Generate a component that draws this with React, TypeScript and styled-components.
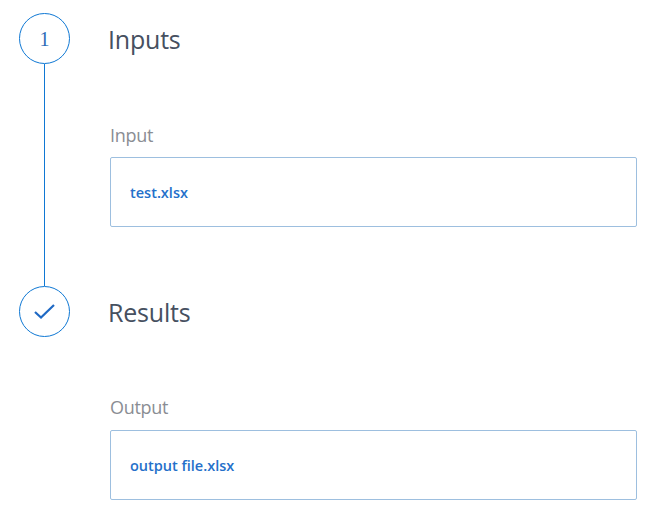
import { createGlobalStyle, styled } from 'styled-components';

const GlobalStyle = createGlobalStyle`
  html, body {
    margin: 0;
    padding: 0;
    background: #fff;
    font-family: "Open Sans", "Noto Sans", sans-serif;
  }
`;

const Page = styled.div`
  width: 651px;
  height: 531px;
  padding: 13px 14px 0 19px;
  box-sizing: border-box;
  overflow: hidden;
`;

const Step = styled.section`
  display: flex;
`;

const Rail = styled.div`
  width: 51px;
  display: flex;
  flex-direction: column;
  align-items: center;
  flex: none;
`;

const Circle = styled.div`
  width: 51px;
  height: 51px;
  box-sizing: border-box;
  border: 1px solid #0f78d4;
  border-radius: 50%;
  display: flex;
  align-items: center;
  justify-content: center;
  flex: none;
`;

const Digit = styled.span`
  margin-top: 2px;
  color: #2b6cb8;
  font-family: "Liberation Serif", serif;
  font-size: 20px;
`;

const Line = styled.div`
  width: 1px;
  flex: 1;
  background: #0f78d4;
`;

const Content = styled.div`
  flex: 1;
  margin-left: 38px;
`;

const Heading = styled.h2`
  margin: 0;
  height: 51px;
  display: flex;
  align-items: center;
  font-size: 25px;
  font-weight: 400;
  letter-spacing: -0.2px;
  color: #46505f;
`;

const Field = styled.div<{ $bottom: number; $top: number }>`
  margin: 0 0 ${(p) => p.$bottom}px 2px;
  padding-top: ${(p) => p.$top}px;
`;

const Label = styled.div<{ $gap: number }>`
  font-size: 18px;
  line-height: 24px;
  letter-spacing: -0.3px;
  color: #8a8d93;
  margin-bottom: ${(p) => p.$gap}px;
`;

const FileBox = styled.div`
  height: 70px;
  box-sizing: border-box;
  border: 1px solid #9dbfdf;
  border-radius: 2px;
  padding-left: 19px;
  display: flex;
  align-items: center;
  font-size: 14.5px;
  font-weight: 600;
  color: #2470ca;
`;

const steps = [
  { title: 'Inputs', label: 'Input', file: 'test.xlsx', done: false, top: 59, gap: 10, bottom: 59 },
  { title: 'Results', label: 'Output', file: 'output file.xlsx', done: true, top: 58, gap: 11, bottom: 0 },
];

const App = () => {
  return (
    <>
      <GlobalStyle />
      <Page>
        {steps.map((step, i) => (
          <Step key={step.title}>
            <Rail>
              <Circle>
                {step.done ? (
                  <svg width="21" height="15" viewBox="0 0 21 15" fill="none">
                    <path d="M1 8 L7 13.5 L20 1" stroke="#1f69c4" strokeWidth="2.2" />
                  </svg>
                ) : (
                  <Digit>{i + 1}</Digit>
                )}
              </Circle>
              {i < steps.length - 1 && <Line />}
            </Rail>
            <Content>
              <Heading>{step.title}</Heading>
              <Field $bottom={step.bottom} $top={step.top}>
                <Label $gap={step.gap}>{step.label}</Label>
                <FileBox>{step.file}</FileBox>
              </Field>
            </Content>
          </Step>
        ))}
      </Page>
    </>
  );
};

export default App;
